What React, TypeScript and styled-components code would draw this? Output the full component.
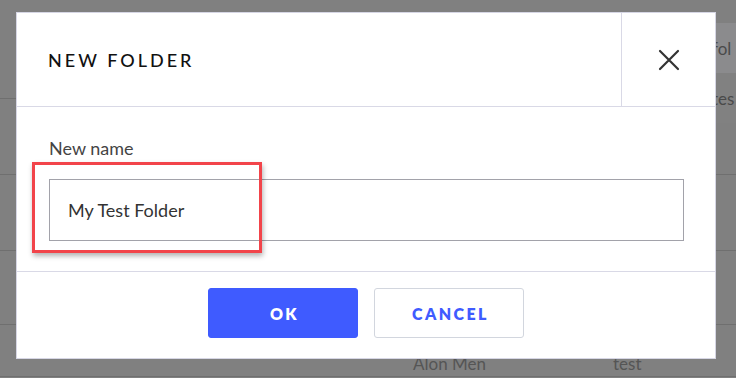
import React from "react";
import styled, { createGlobalStyle } from "styled-components";

const Global = createGlobalStyle`
  html, body { margin: 0; padding: 0; }
  body { font-family: Lato, "Open Sans", sans-serif; background: #808080; }
  * { box-sizing: border-box; }
`;

const Page = styled.div`
  position: relative;
  width: 736px;
  height: 378px;
  overflow: hidden;
  background: #808080;
`;

const Backdrop = styled.div`
  display: flex;
  flex-direction: column;
  width: 100%;
  height: 100%;
`;

const BgHead = styled.div`
  height: 99px;
  border-bottom: 1px solid #6f6f6f;
`;

const BgRow = styled.div<{ $h: number }>`
  height: ${(p) => p.$h}px;
  border-bottom: 1px solid #6f6f6f;
  display: flex;
  align-items: flex-end;
  font-size: 17px;
  color: #555;
`;

const BgCell = styled.span<{ $w: number }>`
  width: ${(p) => p.$w}px;
  padding-bottom: 2px;
`;

const Popup = styled.div`
  position: absolute;
  left: 704px;
  top: 23px;
  width: 32px;
  display: flex;
  flex-direction: column;
  background: #838383;
  overflow: hidden;
`;

const PopupItem = styled.div<{ $shade?: boolean }>`
  height: 50px;
  display: flex;
  align-items: center;
  padding-left: 8px;
  font-size: 17px;
  color: #4a4a4a;
  white-space: nowrap;
  background: ${(p) => (p.$shade ? "#8b8b8d" : "#818181")};
`;

const Dialog = styled.div`
  position: absolute;
  left: 16px;
  top: 12px;
  width: 700px;
  height: 347px;
  background: #fff;
  border: 1px solid #d6d6e4;
  display: flex;
  flex-direction: column;
`;

const Header = styled.div`
  height: 94px;
  display: flex;
  border-bottom: 1px solid #d9d9e6;
`;

const Title = styled.h2`
  flex: 1;
  margin: 0;
  padding-left: 31px;
  display: flex;
  align-items: center;
  font-size: 18px;
  font-weight: 500;
  letter-spacing: 3px;
  color: #111;
`;

const CloseBtn = styled.button`
  width: 94px;
  border: none;
  border-left: 1px solid #d9d9e6;
  background: transparent;
  display: flex;
  align-items: center;
  justify-content: center;
  padding: 0;
  cursor: pointer;
`;

const Body = styled.div`
  height: 165px;
  padding: 31px 31px 0 32px;
  display: flex;
  flex-direction: column;
  border-bottom: 1px solid #d9d9e6;
`;

const Label = styled.label`
  font-size: 18px;
  color: #444;
  line-height: 20px;
  margin-bottom: 21px;
`;

const Field = styled.div`
  position: relative;
`;

const Input = styled.div`
  height: 62px;
  border: 1px solid #a2a2aa;
  display: flex;
  align-items: center;
  padding-left: 18px;
  font-size: 18px;
  color: #333;
`;

const Highlight = styled.div`
  position: absolute;
  left: -17px;
  top: -17px;
  width: 230px;
  height: 91px;
  border: 3px solid #f2444a;
  box-shadow: 1px 3px 5px rgba(0, 0, 0, 0.3);
  pointer-events: none;
`;

const Footer = styled.div`
  flex: 1;
  display: flex;
  justify-content: center;
  align-items: center;
  gap: 16px;
  padding-bottom: 4px;
`;

const Btn = styled.button<{ $primary?: boolean }>`
  width: 150px;
  height: 50px;
  border-radius: 3px;
  font-family: Lato, sans-serif;
  font-size: 16px;
  font-weight: 800;
  letter-spacing: 2.4px;
  padding: 0 0 0 3px;
  cursor: pointer;
  background: ${(p) => (p.$primary ? "#3f5bff" : "#fff")};
  color: ${(p) => (p.$primary ? "#fff" : "#3f5bff")};
  border: 1px solid ${(p) => (p.$primary ? "#3f5bff" : "#d2d6de")};
`;

export default function App() {
  return (
    <Page>
      <Global />
      <Backdrop>
        <BgHead />
        <BgRow $h={76} />
        <BgRow $h={76} />
        <BgRow $h={74} />
        <BgRow $h={52}>
          <BgCell $w={413} />
          <BgCell $w={200}>Alon Men</BgCell>
          <BgCell $w={60}>test</BgCell>
        </BgRow>
      </Backdrop>
      <Popup>
        <PopupItem $shade>fol</PopupItem>
        <PopupItem>tes</PopupItem>
      </Popup>
      <Dialog>
        <Header>
          <Title>NEW FOLDER</Title>
          <CloseBtn aria-label="Close">
            <svg width="22" height="22" viewBox="0 0 22 22">
              <path d="M2 2 L20 20 M20 2 L2 20" stroke="#333" strokeWidth="2.2" strokeLinecap="round" />
            </svg>
          </CloseBtn>
        </Header>
        <Body>
          <Label>New name</Label>
          <Field>
            <Input>My Test Folder</Input>
            <Highlight />
          </Field>
        </Body>
        <Footer>
          <Btn $primary>OK</Btn>
          <Btn>CANCEL</Btn>
        </Footer>
      </Dialog>
    </Page>
  );
}
